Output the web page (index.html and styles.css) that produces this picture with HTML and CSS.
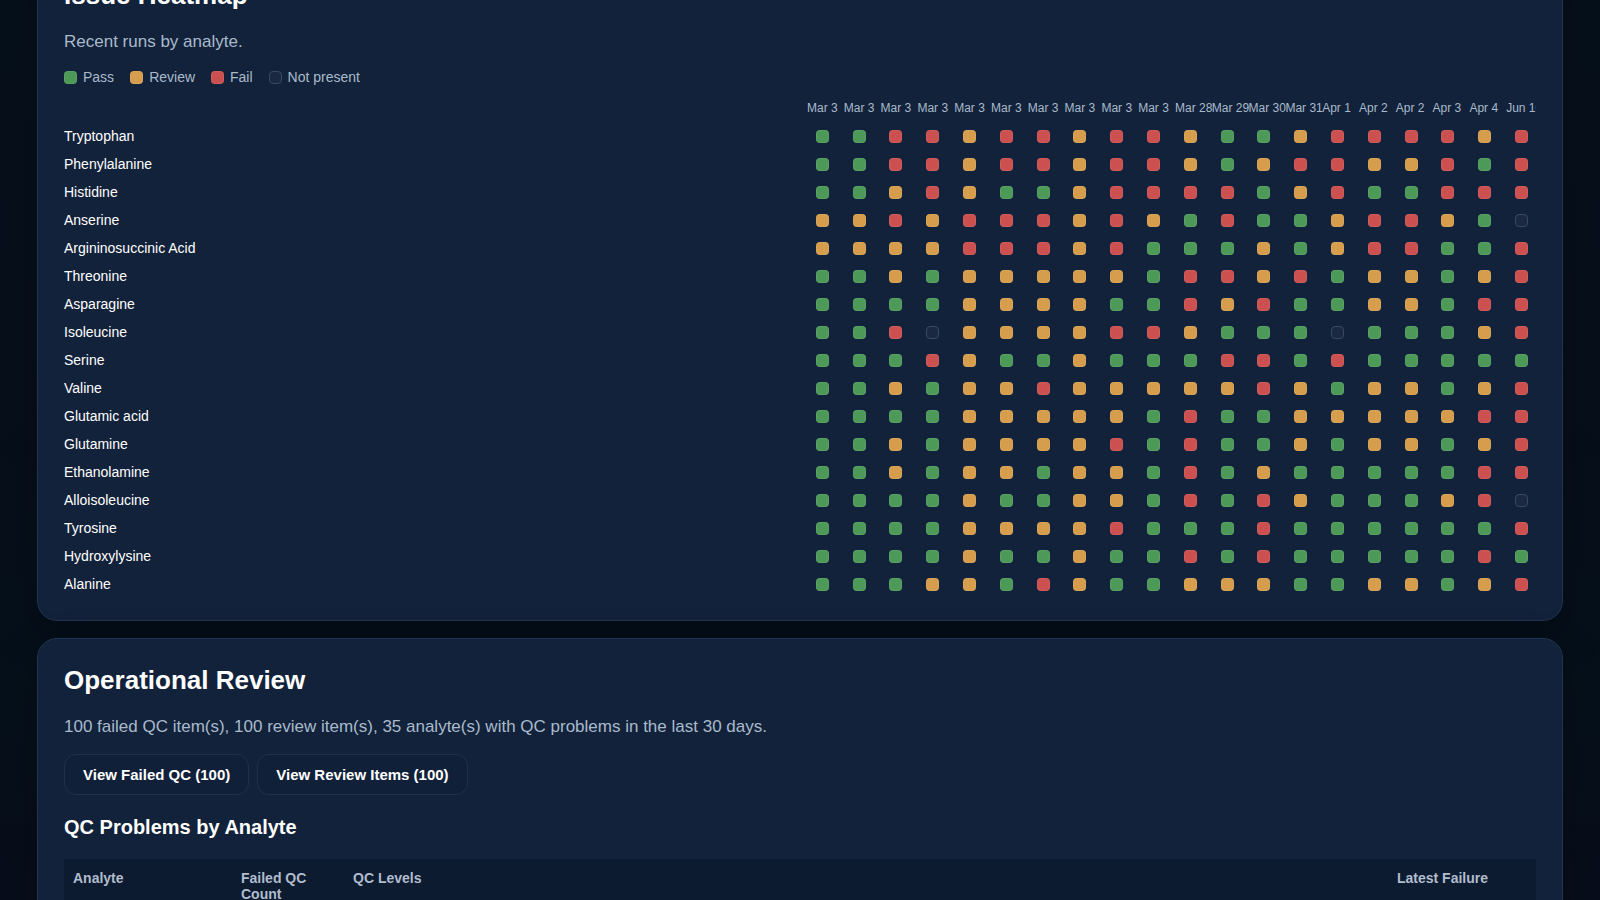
FILE: index.html
```html
<!DOCTYPE html>
<html lang="en">
  <head>
    <meta charset="utf-8" />
    <title>QC Dashboard</title>
    <link rel="stylesheet" href="styles.css">
  </head>
  <body>
    <main class="page">
      <section class="card">
        <h2>Issue Heatmap</h2>
        <p class="muted">Recent runs by analyte.</p>
        <ul class="legend">
          <li><span class="dot pass"></span>Pass</li>
          <li><span class="dot review"></span>Review</li>
          <li><span class="dot fail"></span>Fail</li>
          <li><span class="dot none"></span>Not present</li>
        </ul>
        <div class="heatmap-wrap">
          <table class="heatmap">
            <thead>
              <tr id="heatmap-head"></tr>
            </thead>
            <tbody id="heatmap-body"></tbody>
          </table>
        </div>
      </section>

      <section class="card">
        <h2>Operational Review</h2>
        <p class="muted">100 failed QC item(s), 100 review item(s), 35 analyte(s) with QC problems in the last 30 days.</p>
        <div class="actions">
          <button type="button">View Failed QC (100)</button>
          <button type="button">View Review Items (100)</button>
        </div>
        <h3>QC Problems by Analyte</h3>
        <table class="problems">
          <thead>
            <tr>
              <th class="col-analyte">Analyte</th>
              <th class="col-count">Failed QC Count</th>
              <th>QC Levels</th>
              <th class="col-latest">Latest Failure</th>
            </tr>
          </thead>
        </table>
      </section>
    </main>

    <script src="heatmap.js"></script>
  </body>
</html>
```
FILE: styles.css
```css
* {
  box-sizing: border-box;
}

body {
  margin: 0;
  height: 100vh;
  overflow: hidden;
  background: linear-gradient(180deg, #06101b 0%, #060e1a 50%, #05101a 75%, #070d1a 100%);
  color: #ffffff;
  font-family: "Liberation Sans", Arial, sans-serif;
  font-size: 16px;
}

/* the view starts part way down the first card */
.page {
  display: flex;
  flex-direction: column;
  gap: 17px;
  margin-top: -47px;
  padding: 0 37px;
}

.card {
  padding: 26px;
  background: #12223a;
  border: 1px solid #223350;
  border-radius: 20px;
  box-shadow: 0 18px 45px rgba(0, 0, 0, 0.25);
}

h2 {
  margin: 0 0 21px;
  font-size: 26px;
  line-height: 30px;
}

h3 {
  margin: 20px 0;
  font-size: 20px;
  line-height: 24px;
}

.muted {
  margin: 0 0 16px;
  color: #a9bacc;
  font-size: 17px;
  line-height: 22px;
}

.legend {
  display: flex;
  flex-wrap: wrap;
  gap: 16px;
  margin: 0 0 13px;
  padding: 0;
  list-style: none;
  color: #a9bacc;
  font-size: 14px;
  line-height: 16px;
}

.legend li {
  display: flex;
  align-items: center;
  gap: 6px;
}

.dot {
  display: block;
  width: 13px;
  height: 13px;
  border: 1px solid rgba(255, 255, 255, 0.08);
  border-radius: 4px;
}

.pass {
  background: #4d9a58;
}

.review {
  background: #d69e4c;
}

.fail {
  background: #cc504f;
}

.none {
  background: #1a2941;
  border-color: #3a4860;
}

.heatmap-wrap {
  overflow: hidden;
}

.heatmap,
.heatmap thead,
.heatmap tbody {
  display: grid;
  gap: 8px;
}

.heatmap tr {
  display: grid;
  grid-template-columns: 20fr repeat(20, minmax(0, 1fr));
  align-items: center;
  height: 20px;
}

.heatmap th {
  padding: 0;
  font-size: 14px;
  font-weight: normal;
  line-height: 16px;
  text-align: left;
}

.heatmap td {
  display: flex;
  justify-content: center;
  padding: 0 0 0 8px;
}

.heatmap thead th {
  padding-left: 7px;
  color: #a9bacc;
  font-size: 12px;
  white-space: nowrap;
}

.actions {
  display: flex;
  gap: 8px;
}

.actions button {
  height: 41px;
  padding: 0 18px;
  background: #102039;
  border: 1px solid #20304a;
  border-radius: 12px;
  color: #ffffff;
  font-family: inherit;
  font-size: 15px;
  font-weight: bold;
  cursor: pointer;
}

.problems {
  width: 100%;
  table-layout: fixed;
  border-collapse: collapse;
}

.problems th {
  padding: 11px 9px;
  background: #0c1b30;
  color: #b1bccd;
  font-size: 14px;
  line-height: 16px;
  text-align: left;
  vertical-align: top;
}

.problems .col-analyte {
  width: 168px;
}

.problems .col-count {
  width: 112px;
}

.problems .col-latest {
  width: 148px;
}
```
FILE: heatmap.js
```js
const runs = [
  "Mar 3", "Mar 3", "Mar 3", "Mar 3", "Mar 3", "Mar 3", "Mar 3", "Mar 3", "Mar 3", "Mar 3",
  "Mar 28", "Mar 29", "Mar 30", "Mar 31", "Apr 1", "Apr 2", "Apr 2", "Apr 3", "Apr 4", "Jun 10",
];

// one letter per run: p = pass, r = review, f = fail, - = not present
const analytes = [
  ["Tryptophan", "ppffrffrffrpprffffrf"],
  ["Phenylalanine", "ppffrffrffrprffrrfpf"],
  ["Histidine", "pprfrpprffffprfppfff"],
  ["Anserine", "rrfrfffrfrpfpprffrp-"],
  ["Argininosuccinic Acid", "rrrrfffrfppprprffppf"],
  ["Threonine", "pprprrrrrpffrfprrprf"],
  ["Asparagine", "pppprrrrppfrfpprrpff"],
  ["Isoleucine", "ppf-rrrrffrppp-ppprf"],
  ["Serine", "pppfrpprpppffpfppppp"],
  ["Valine", "pprprrfrrrrrfrprrprf"],
  ["Glutamic acid", "pppprrrrrpfpprrrrrff"],
  ["Glutamine", "pprprrrrfpfpprprrprf"],
  ["Ethanolamine", "pprprrprrpfprpppppff"],
  ["Alloisoleucine", "pppprpprrpfpfrppprf-"],
  ["Tyrosine", "pppprrrrfpppfppppppf"],
  ["Hydroxylysine", "pppprpprppfpfpppppfp"],
  ["Alanine", "ppprrpfrpprrrpprrprf"],
];

const names = { p: "pass", r: "review", f: "fail", "-": "none" };

const head = document.getElementById("heatmap-head");
const body = document.getElementById("heatmap-body");

head.appendChild(document.createElement("td"));
runs.forEach((run) => {
  const th = document.createElement("th");
  th.scope = "col";
  th.textContent = run;
  head.appendChild(th);
});

analytes.forEach(([name, results]) => {
  const row = document.createElement("tr");
  const label = document.createElement("th");
  label.scope = "row";
  label.textContent = name;
  row.appendChild(label);

  [...results].forEach((result) => {
    const cell = document.createElement("td");
    const dot = document.createElement("span");
    dot.className = "dot " + names[result];
    cell.appendChild(dot);
    row.appendChild(cell);
  });

  body.appendChild(row);
});
```
